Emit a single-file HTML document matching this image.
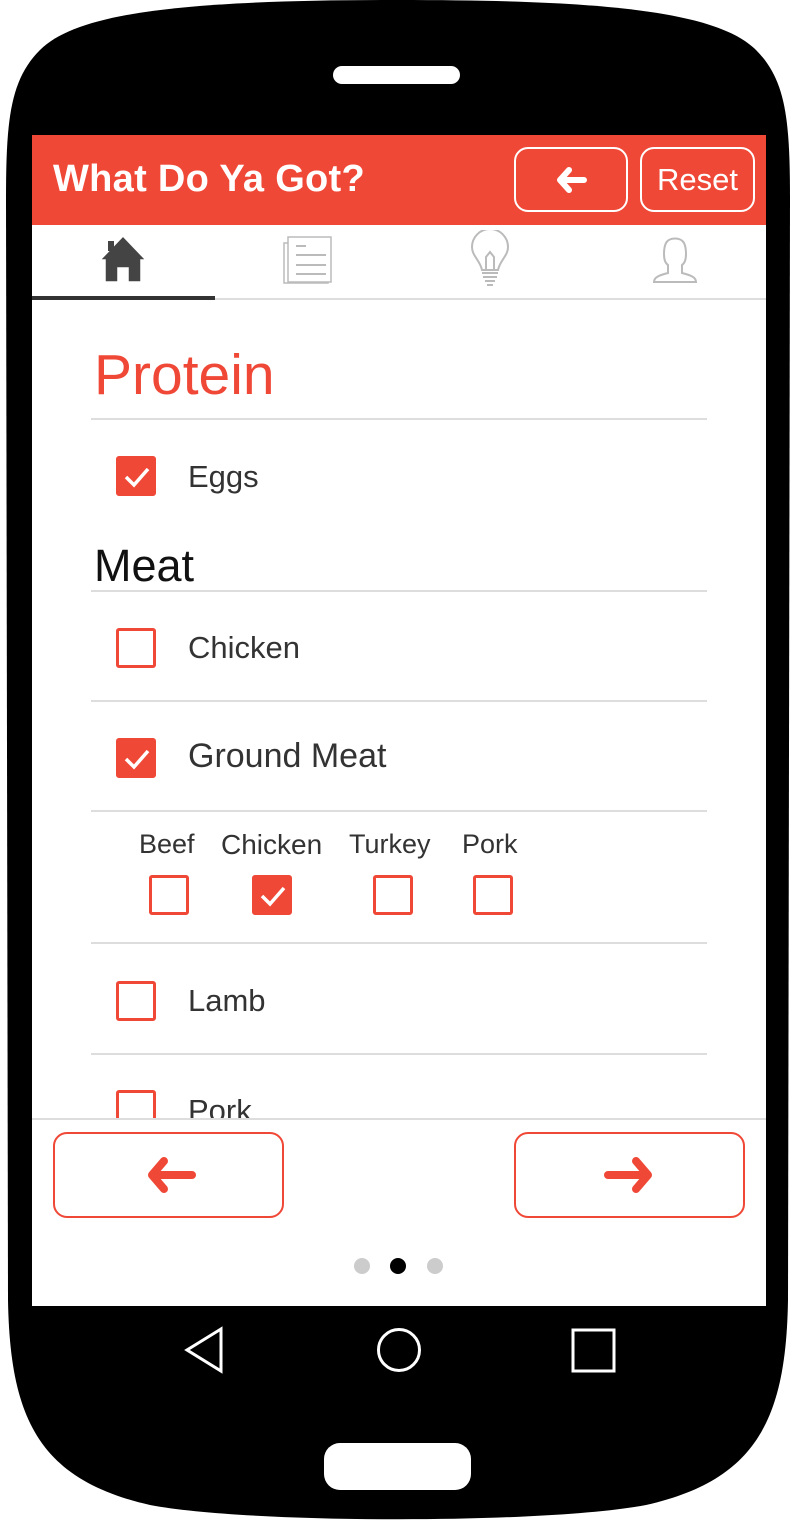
<!DOCTYPE html>
<html><head><meta charset="utf-8"><style>
*{margin:0;padding:0;box-sizing:border-box}
body{width:796px;height:1525px;background:#fff;position:relative;overflow:hidden;font-family:"Liberation Sans",sans-serif}
.a{position:absolute}
.screen{left:32px;top:135px;width:734px;height:1171px;background:#fff;overflow:hidden}
.cb{position:absolute;width:40px;height:40px;border:3px solid #F04837;border-radius:3px}
.cb.on{background:#F04837}
.cb.on svg{position:absolute;left:5px;top:7px}
.ln{position:absolute;left:59px;width:616px;height:2px;background:#ddd}
.t{position:absolute;color:#333;font-size:31px;white-space:nowrap}
.s{position:absolute;color:#333;font-size:27px;white-space:nowrap}
</style></head><body>
<svg class="a" style="left:0;top:0" width="796" height="1525"><path d="M398,0 C200,0 80,10 40,50 C10,80 6,120 6,200 L8,1300 C10,1420 40,1480 150,1505 C250,1524 546,1524 646,1505 C756,1480 786,1420 788,1300 L790,200 C790,120 786,80 756,50 C716,10 596,0 398,0 Z" fill="#000"/></svg>
<div class="a" style="left:333px;top:66px;width:127px;height:18px;background:#fff;border-radius:9px"></div>
<div class="a" style="left:324px;top:1443px;width:147px;height:47px;background:#fff;border-radius:16px"></div>
<svg class="a" style="left:0;top:1300px" width="796" height="100">
<path d="M221,29 L187,50 L221,71 Z" fill="none" stroke="#fff" stroke-width="3"/>
<circle cx="399" cy="50" r="20.5" fill="none" stroke="#fff" stroke-width="3"/>
<rect x="573" y="30" width="41" height="41" fill="none" stroke="#fff" stroke-width="3"/>
</svg>
<div class="a screen">
 <div class="a" style="left:0;top:0;width:734px;height:90px;background:#F04837"></div>
 <div class="a" style="left:21px;top:23px;color:#fff;font-size:38px;font-weight:bold;white-space:nowrap;letter-spacing:0.3px">What Do Ya Got?</div>
 <div class="a" style="left:482px;top:12px;width:114px;height:65px;border:2px solid #fff;border-radius:14px"></div>
 <svg class="a" style="left:520px;top:30px" width="40" height="30"><path d="M32,15 H8 M17,5 L8,15 L17,25" fill="none" stroke="#fff" stroke-width="6" stroke-linecap="round" stroke-linejoin="round"/></svg>
 <div class="a" style="left:608px;top:12px;width:115px;height:65px;border:2px solid #fff;border-radius:14px;color:#fff;font-size:31px;text-align:center;line-height:62px">Reset</div>
 <svg class="a" style="left:66px;top:98px" width="52" height="52"><path d="M25,3 L2,27 H7 V49 H20 V35 H30 V49 H43 V27 H48 Z" fill="#444" stroke="#fff" stroke-width="1.5"/><rect x="10" y="8" width="6" height="10" fill="#444"/></svg>
 <svg class="a" style="left:250px;top:98px" width="52" height="52"><rect x="2" y="10" width="44" height="40" fill="none" stroke="#bbb" stroke-width="1.5"/><rect x="6" y="4" width="43" height="45" fill="#fff" stroke="#bbb" stroke-width="1.5"/><path d="M14,13 H24 M14,22 H44 M14,32 H44 M14,41 H44" stroke="#bbb" stroke-width="2"/></svg>
 <svg class="a" style="left:436px;top:95px" width="44" height="62"><path d="M14,40 C12,30 4,26 4,17 A18,18 0 0 1 40,17 C40,26 32,30 30,40 Z" fill="none" stroke="#bbb" stroke-width="2"/><path d="M18,40 V27 L22,22 L26,27 V40 M14,43 H30 M15,47 H29 M17,51 H27 M19,55 H25" fill="none" stroke="#bbb" stroke-width="2"/></svg>
 <svg class="a" style="left:618px;top:100px" width="50" height="50"><path d="M18,30 C12,26 14,12 16,8 C19,2 31,2 34,8 C36,12 38,26 32,30 V38 C40,40 46,42 46,47 H4 C4,42 10,40 18,38 Z" fill="none" stroke="#bbb" stroke-width="2"/></svg>
 <div class="a" style="left:0;top:163px;width:734px;height:2px;background:#ddd"></div>
 <div class="a" style="left:0;top:161px;width:183px;height:4px;background:#333"></div>
 <div class="a" style="left:62px;top:207px;color:#F04837;font-size:57px;white-space:nowrap">Protein</div>
 <div class="ln" style="top:283px"></div>
 <div class="cb on" style="left:84px;top:321px"><svg width="26" height="22"><path d="M2,11 L10,19 L24,3" fill="none" stroke="#fff" stroke-width="3.5"/></svg></div>
 <div class="t" style="left:156px;top:324px">Eggs</div>
 <div class="a" style="left:62px;top:405px;color:#111;font-size:45px;white-space:nowrap">Meat</div>
 <div class="ln" style="top:455px"></div>
 <div class="cb" style="left:84px;top:493px"></div>
 <div class="t" style="left:156px;top:495px">Chicken</div>
 <div class="ln" style="top:565px"></div>
 <div class="cb on" style="left:84px;top:603px"><svg width="26" height="22"><path d="M2,11 L10,19 L24,3" fill="none" stroke="#fff" stroke-width="3.5"/></svg></div>
 <div class="t" style="left:156px;font-size:34px;top:602px">Ground Meat</div>
 <div class="ln" style="top:675px"></div>
 <div class="s" style="left:107px;top:694px">Beef</div>
 <div class="s" style="left:189px;top:694px;font-size:28px">Chicken</div>
 <div class="s" style="left:317px;top:694px">Turkey</div>
 <div class="s" style="left:430px;top:694px">Pork</div>
 <div class="cb" style="left:117px;top:740px"></div>
 <div class="cb on" style="left:220px;top:740px"><svg width="26" height="22"><path d="M2,11 L10,19 L24,3" fill="none" stroke="#fff" stroke-width="3.5"/></svg></div>
 <div class="cb" style="left:341px;top:740px"></div>
 <div class="cb" style="left:441px;top:740px"></div>
 <div class="ln" style="top:807px"></div>
 <div class="cb" style="left:84px;top:846px"></div>
 <div class="t" style="left:156px;top:848px">Lamb</div>
 <div class="ln" style="top:918px"></div>
 <div class="cb" style="left:84px;top:955px"></div>
 <div class="t" style="left:156px;top:958px">Pork</div>
 <div class="a" style="left:0;top:983px;width:734px;height:188px;background:#fff;border-top:2px solid #ddd"></div>
 <div class="a" style="left:21px;top:997px;width:231px;height:86px;border:2px solid #F04837;border-radius:14px"></div>
 <svg class="a" style="left:108px;top:1020px" width="60" height="40"><path d="M52,20 H14 M24,6 L12,20 L24,34" fill="none" stroke="#F04837" stroke-width="8" stroke-linecap="round" stroke-linejoin="round"/></svg>
 <div class="a" style="left:482px;top:997px;width:231px;height:86px;border:2px solid #F04837;border-radius:14px"></div>
 <svg class="a" style="left:568px;top:1020px" width="60" height="40"><path d="M8,20 H46 M36,6 L48,20 L36,34" fill="none" stroke="#F04837" stroke-width="8" stroke-linecap="round" stroke-linejoin="round"/></svg>
 <div class="a" style="left:322px;top:1123px;width:16px;height:16px;border-radius:50%;background:#ccc"></div>
 <div class="a" style="left:358px;top:1123px;width:16px;height:16px;border-radius:50%;background:#000"></div>
 <div class="a" style="left:395px;top:1123px;width:16px;height:16px;border-radius:50%;background:#ccc"></div>
</div>
</body></html>
